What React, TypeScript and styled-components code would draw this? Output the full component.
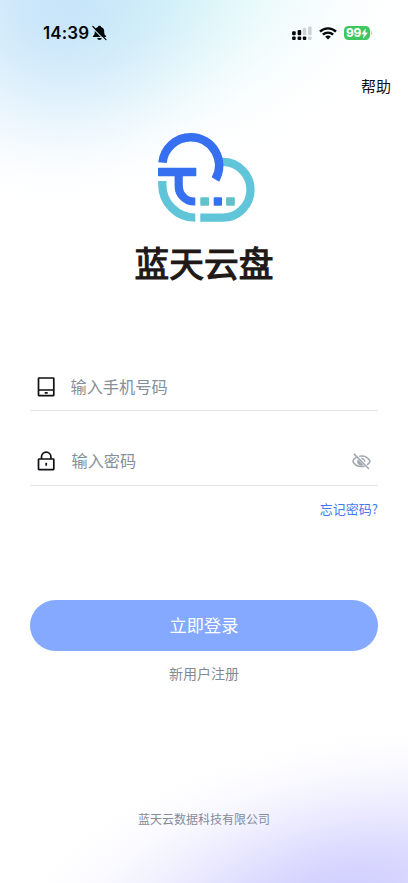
import React from "react";
import styled, { createGlobalStyle } from "styled-components";

const GlobalStyle = createGlobalStyle`
  *, *::before, *::after { box-sizing: border-box; }
  body { margin: 0; background: #fff; }
  button, input { font: inherit; border: 0; padding: 0; background: none; }
`;

const Screen = styled.main`
  position: relative;
  isolation: isolate;
  width: 408px;
  height: 883px;
  overflow: hidden;
  display: flex;
  flex-direction: column;
  font-family: "Noto Sans CJK SC", sans-serif;
  background: #fff;
`;

/* Soft tinted light behind the content; $rgb is the tint, $x/$y its centre. */
const Glow = styled.div<{ $rgb: string; $x: number; $y: number; $rx: number; $ry: number; $alpha: number; $turn: number }>`
  position: absolute;
  z-index: -1;
  left: ${(p) => p.$x - p.$rx}px;
  top: ${(p) => p.$y - p.$ry}px;
  width: ${(p) => p.$rx * 2}px;
  height: ${(p) => p.$ry * 2}px;
  transform: rotate(${(p) => p.$turn}deg);
  background: radial-gradient(
    closest-side,
    ${(p) =>
      [1, 0.97, 0.88, 0.75, 0.6, 0.45, 0.31, 0.19, 0.09, 0.03, 0]
        .map((a, i) => `rgba(${p.$rgb}, ${(a * p.$alpha).toFixed(3)}) ${i * 10}%`)
        .join(", ")}
  );
`;

const StatusBar = styled.header`
  height: 66px;
  padding: 0 36px 0 43px;
  display: flex;
  justify-content: space-between;
  align-items: center;
`;

const StatusGroup = styled.div<{ $gap: number }>`
  display: flex;
  align-items: center;
  gap: ${(p) => p.$gap}px;
`;

const Time = styled.span`
  font: 600 17px/20px Inter, sans-serif;
  letter-spacing: 0.1px;
  color: #050708;
`;

const TopActions = styled.nav`
  height: 40px;
  padding-right: 17px;
  display: flex;
  justify-content: flex-end;
  align-items: center;
`;

const HelpButton = styled.button`
  font-size: 15px;
  line-height: 22px;
  color: #111;
`;

const Brand = styled.section`
  padding-top: 25px;
  display: flex;
  flex-direction: column;
  align-items: center;
`;

const BrandName = styled.h1`
  margin: 14px 0 0;
  font-size: 34.7px;
  line-height: 50px;
  font-weight: 400;
  color: #211917;
  -webkit-text-stroke: 1.2px #211917;
`;

const Form = styled.form`
  margin-top: 76px;
  padding: 0 30px;
  display: flex;
  flex-direction: column;
`;

const Field = styled.label<{ $tall?: boolean }>`
  height: ${(p) => (p.$tall ? 75 : 48)}px;
  padding: ${(p) => (p.$tall ? 26 : 0)}px 7px 0 7px;
  display: flex;
  align-items: center;
  border-bottom: 1px solid #e3e4e6;
`;

const Input = styled.input<{ $inset: number }>`
  flex: 1;
  min-width: 0;
  height: 30px;
  margin-left: ${(p) => p.$inset}px;
  padding-bottom: 2px;
  font-size: 16.2px;
  outline: none;
  color: #222;
  &::placeholder { color: #858f99; opacity: 1; }
`;

const ForgotButton = styled.button`
  align-self: flex-end;
  margin-top: 13px;
  font-size: 13px;
  line-height: 20px;
  color: #4379ee;
`;

const LoginButton = styled.button`
  height: 51px;
  margin-top: 81px;
  padding-bottom: 2px;
  border-radius: 26px;
  background: #84a9ff;
  color: #fff;
  font-size: 17.2px;
  line-height: 26px;
`;

const RegisterButton = styled.button`
  align-self: center;
  margin-top: 12px;
  font-size: 14px;
  line-height: 20px;
  color: #818b95;
`;

const Footer = styled.footer`
  margin-top: auto;
  padding-bottom: 55px;
  text-align: center;
  font-size: 12px;
  line-height: 18px;
  color: #858b9a;
`;

const BellOffIcon = () => (
  <svg width="15" height="16" viewBox="0 0 15 16" fill="#050708">
    <path d="M7.500.800c.9 0 1.500.5 1.600 1.200 2 .6 3.100 2.200 3.100 4.400 0 2.200.4 3.200 1.400 4.200.4.400.6.900.6 1.500H.8c0-.6.2-1.100.6-1.500 1-1 1.400-2 1.400-4.200 0-2.200 1.100-3.800 3.100-4.400.1-.7.700-1.200 1.600-1.200ZM5.200 13h4.600c-.2 1.200-1.100 1.900-2.300 1.900S5.400 14.200 5.200 13Z" />
    <path d="M.2 2.700 12.600 15.100" stroke="#c9e9f5" strokeWidth="1.200" />
    <path d="M.9 1.500 14 14.600" stroke="#050708" strokeWidth="1.200" strokeLinecap="round" />
  </svg>
);

const SignalIcon = () => (
  <svg width="21" height="15" viewBox="0 0 21 15" overflow="visible" fill="#050708">
    <g transform="translate(.6 0)">
      <rect x=".5" y="5.200" width="3.600" height="4" rx="1" />
      <rect x="6" y="4" width="3.600" height="5.200" rx="1" />
      <rect x="11.200" y="2" width="3.400" height="7.200" rx="1" fill="#cdd1d2" />
      <rect x="16.500" y=".4" width="3.500" height="8.800" rx="1" fill="#cdd1d2" />
      <rect x=".5" y="10.600" width="3.600" height="3.500" rx="1" />
      <rect x="6" y="10.600" width="3.600" height="3.500" rx="1" />
      <rect x="11.200" y="10.600" width="3.500" height="3.500" rx="1" />
      <rect x="16.500" y="10.600" width="3.500" height="3.500" rx="1" fill="#cdd1d2" />
    </g>
  </svg>
);

const WifiIcon = () => (
  <svg width="18" height="13" viewBox="0 0 18 13" fill="none" stroke="#050708" strokeWidth="2.400">
    <path d="M1 4.600a11.500 11.500 0 0 1 16 0" />
    <path d="M3.900 7.700a7.300 7.300 0 0 1 10.200 0" />
    <path d="M9 12.600 6.200 9.800a4 4 0 0 1 5.600 0Z" fill="#050708" stroke="none" />
  </svg>
);

const BatteryWrap = styled.div`
  display: flex;
  align-items: center;
  gap: 1px;
  &::after {
    content: "";
    width: 1px;
    height: 4px;
    border-radius: 0 1px 1px 0;
    background: #a8ddb5;
  }
`;

const Battery = styled.div`
  width: 26px;
  height: 14px;
  border-radius: 4.5px;
  display: flex;
  align-items: center;
  justify-content: center;
  background: #3ec75f;
  color: #fff;
  font: 700 12px/14px Inter, sans-serif;
  letter-spacing: -0.2px;
`;

const BoltIcon = () => (
  <svg width="7" height="11" viewBox="0 0 7 11">
    <path d="M4.800.2.200 6.200h2.500L2.100 10.800l4.700-6.300H4.200Z" fill="#fff" />
  </svg>
);

const CloudLogo = () => (
  <svg width="100" height="92" viewBox="154 131 100 92" overflow="visible" fill="none">
    <g stroke="#60c5d9" strokeWidth="8.300">
      <path d="M162.300 181v3.700a33 33 0 0 0 33 33" />
      <path d="M200.300 217.700h22.300a27.900 27.900 0 0 0 0-55.800h-2" />
    </g>
    <g stroke="#366fef" strokeWidth="8.600">
      <path d="M162.500 162.700C163.900 148.500 176 137.300 190.800 137.300A28.200 28.200 0 0 1 215.400 179.500" />
      <path d="M178.700 173v13.500a15.500 15.500 0 0 0 15.500 15h1.100" strokeWidth="8.200" />
    </g>
    <rect x="158" y="167.700" width="38.300" height="8.600" rx=".8" fill="#366fef" />
    <rect x="200.300" y="197.200" width="8.700" height="8.500" rx=".8" fill="#60c2c8" />
    <rect x="213.700" y="197.200" width="8.300" height="8.500" rx=".8" fill="#366fef" />
    <rect x="226.100" y="197.200" width="8.700" height="8.500" rx=".8" fill="#60c2c8" />
  </svg>
);

const PhoneIcon = () => (
  <svg width="18" height="20" viewBox="0 0 18 20" fill="none" stroke="#101114" strokeWidth="1.700">
    <rect x="1.500" y="1" width="15.300" height="17.600" rx=".5" />
    <path d="M1.500 13h15.300M7.700 15.900h3" />
  </svg>
);

const LockIcon = () => (
  <svg width="18" height="20" viewBox="0 0 18 20" fill="none" stroke="#101114" strokeWidth="1.700">
    <rect x="1.500" y="8" width="15.300" height="10.700" rx=".6" />
    <path d="M4.500 8V5.800a4.700 4.700 0 0 1 9.400 0V8M9.200 11.800v3" />
  </svg>
);

const EyeOffIcon = () => (
  <svg width="19" height="17" viewBox="0 0 19 17" fill="none" stroke="#a2a8b2" strokeWidth="1.500">
    <path d="M4.300 4.100C2.500 5.200 1.400 6.800.9 8.400c1.400 3.300 5 5.200 8.600 5.200 1.200 0 2.300-.2 3.200-.5M7.300 3.200c4.500-.8 8.800 1.200 10.800 5.200-.6 1.400-1.700 2.600-3.100 3.500" />
    <path d="M5.800 6.400a4.100 4.100 0 0 0 5.800 5.500Z" fill="#a2a8b2" stroke="none" />
    <path d="M9.200 5.400a3.300 3.300 0 0 1 3.500 3.400" />
    <path d="M1.900.9 17 16" />
  </svg>
);

export default function App() {
  return (
    <>
      <GlobalStyle />
      <Screen>
        <Glow $rgb="190, 240, 243" $x={140} $y={-20} $rx={290} $ry={200} $alpha={0.62} $turn={-14} />
        <Glow $rgb="188, 220, 250" $x={55} $y={5} $rx={210} $ry={205} $alpha={0.66} $turn={-14} />
        <Glow $rgb="203, 201, 255" $x={340} $y={900} $rx={350} $ry={165} $alpha={0.88} $turn={-12} />
        <StatusBar>
          <StatusGroup $gap={3}>
            <Time>14:39</Time>
            <BellOffIcon />
          </StatusGroup>
          <StatusGroup $gap={7}>
            <SignalIcon />
            <WifiIcon />
            <BatteryWrap>
              <Battery>99<BoltIcon /></Battery>
            </BatteryWrap>
          </StatusGroup>
        </StatusBar>
        <TopActions>
          <HelpButton type="button">帮助</HelpButton>
        </TopActions>
        <Brand>
          <CloudLogo />
          <BrandName>蓝天云盘</BrandName>
        </Brand>
        <Form onSubmit={(e: React.FormEvent) => e.preventDefault()}>
          <Field>
            <PhoneIcon />
            <Input $inset={15.5} type="tel" placeholder="输入手机号码" />
          </Field>
          <Field $tall>
            <LockIcon />
            <Input $inset={16.5} type="password" placeholder="输入密码" />
            <EyeOffIcon />
          </Field>
          <ForgotButton type="button">忘记密码?</ForgotButton>
          <LoginButton type="submit">立即登录</LoginButton>
          <RegisterButton type="button">新用户注册</RegisterButton>
        </Form>
        <Footer>蓝天云数据科技有限公司</Footer>
      </Screen>
    </>
  );
}
